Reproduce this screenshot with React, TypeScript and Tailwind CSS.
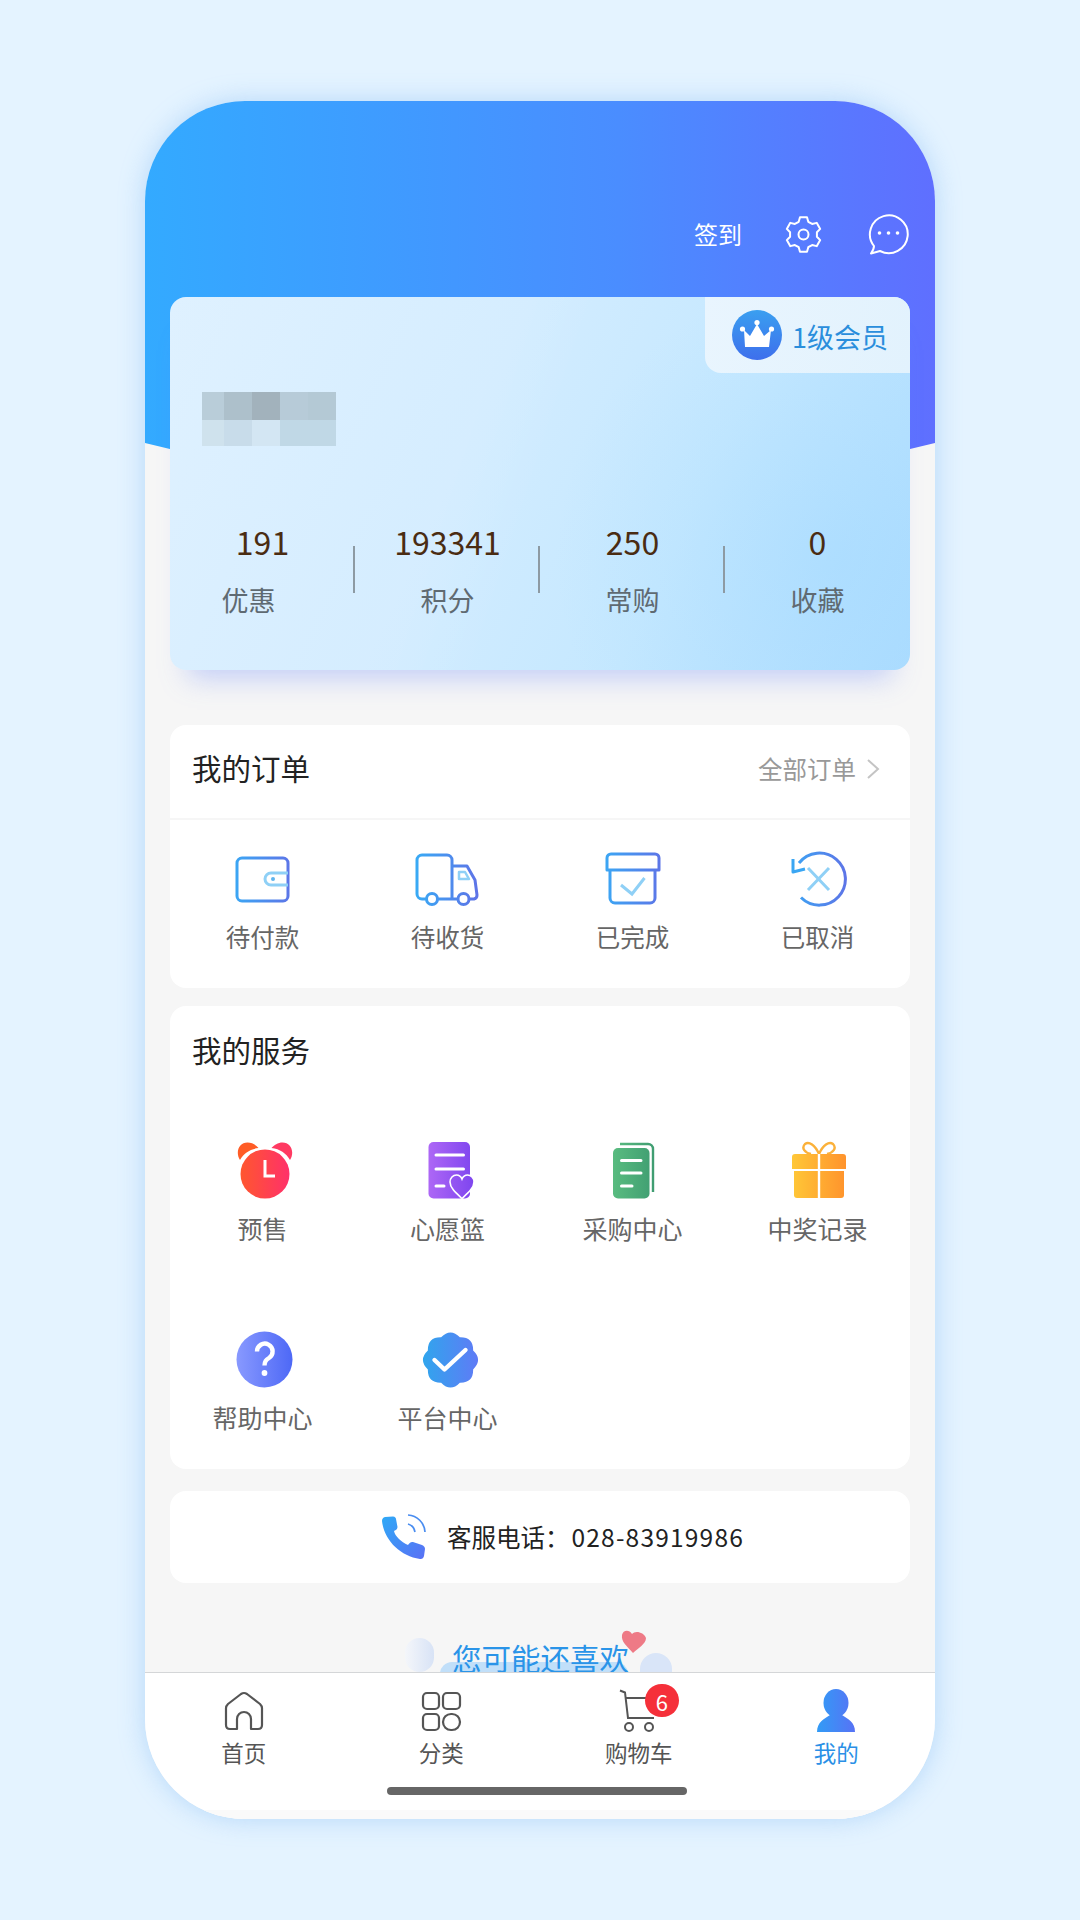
const FONT = "font-['Noto_Sans_CJK_SC','Noto_Sans',sans-serif]";

const stats = [
  { value: '191', label: '优惠', shift: 'pr-[28px]' },
  { value: '193341', label: '积分', shift: '' },
  { value: '250', label: '常购', shift: '' },
  { value: '0', label: '收藏', shift: '' },
];

const blurTop = ['bg-[#b9cdd9]', 'bg-[#adc0cb]', 'bg-[#a2b2bc]', 'bg-[#b7cbd8]', 'bg-[#b4c9d5]'];
const blurBottom = ['bg-[#cfe2ed]', 'bg-[#c8dcea]', 'bg-[#d3e6f3]', 'bg-[#c0d8e6]', 'bg-[#c0d8e6]'];
const blurWidths = ['w-[22px]', 'w-[28px]', 'w-[28px]', 'w-[28px]', 'w-[28px]'];

// 6 tooth gear outline
function gearPath() {
  const pts: string[] = [];
  for (let i = 0; i < 6; i++) {
    const a = (i * Math.PI) / 3 - Math.PI / 2;
    const p = (r: number, d: number) =>
      `${(18.5 + r * Math.cos(a + d)).toFixed(2)} ${(18.5 + r * Math.sin(a + d)).toFixed(2)}`;
    pts.push(p(13.6, -0.36), p(17.6, -0.2), p(17.6, 0.2), p(13.6, 0.36));
  }
  return 'M' + pts.join(' L') + ' Z';
}

// scalloped badge
function scallopPath(cx: number, cy: number) {
  let d = '';
  for (let i = 0; i < 8; i++) {
    const a0 = (i * Math.PI) / 4 - Math.PI / 2 - Math.PI / 8;
    const a1 = a0 + Math.PI / 4;
    const am = (a0 + a1) / 2;
    const x0 = cx + 24.5 * Math.cos(a0);
    const y0 = cy + 24.5 * Math.sin(a0);
    const x1 = cx + 24.5 * Math.cos(a1);
    const y1 = cy + 24.5 * Math.sin(a1);
    const xm = cx + 32.5 * Math.cos(am);
    const ym = cy + 32.5 * Math.sin(am);
    d += `${i === 0 ? `M${x0.toFixed(2)} ${y0.toFixed(2)} ` : ''}Q${xm.toFixed(2)} ${ym.toFixed(2)} ${x1.toFixed(2)} ${y1.toFixed(2)} `;
  }
  return d + 'Z';
}

const Grad = ({ id, from, to, x2 = 66 }: { id: string; from: string; to: string; x2?: number }) => (
  <linearGradient id={id} gradientUnits="userSpaceOnUse" x1="0" y1="0" x2={x2} y2="0">
    <stop offset="0" stopColor={from} />
    <stop offset="1" stopColor={to} />
  </linearGradient>
);

const WalletIcon = () => (
  <svg width="66" height="56" viewBox="0 0 66 56" fill="none">
    <defs><Grad id="o1" from="#38abf5" to="#6070e6" /></defs>
    <rect x="7" y="7" width="51" height="43" rx="5" stroke="url(#o1)" strokeWidth="3" />
    <path d="M58 22 H41 a6 6 0 0 0 0 12 H58" stroke="#8fd0f6" strokeWidth="3" />
    <circle cx="43" cy="28" r="2" fill="#5fb4ee" />
  </svg>
);

const TruckIcon = () => (
  <svg width="66" height="56" viewBox="0 0 66 56" fill="none">
    <defs><Grad id="o2" from="#38abf5" to="#6070e6" /></defs>
    <g stroke="url(#o2)" strokeWidth="3" strokeLinejoin="round">
      <path d="M11.5 48 H7 a5 5 0 0 1 -5 -5 V9 a5 5 0 0 1 5 -5 H32 a5 5 0 0 1 5 5 V48" />
      <path d="M37 15 H52 L60 29 L62 44 a4 4 0 0 1 -3 4 H54" />
      <path d="M22.5 48 H43" />
      <circle cx="17" cy="48" r="5.5" />
      <circle cx="48.5" cy="48" r="5.5" />
    </g>
    <path d="M44 21 H50 L54 28 H44 Z" stroke="#8fd0f6" strokeWidth="2.5" strokeLinejoin="round" />
  </svg>
);

const BoxIcon = () => (
  <svg width="66" height="56" viewBox="0 0 66 56" fill="none">
    <defs><Grad id="o3" from="#38abf5" to="#6070e6" /></defs>
    <g stroke="url(#o3)" strokeWidth="3" strokeLinejoin="round">
      <path d="M7 19 V7 a4 4 0 0 1 4 -4 H55 a4 4 0 0 1 4 4 V19 Z" />
      <path d="M10 19 V47 a5 5 0 0 0 5 5 H50 a5 5 0 0 0 5 -5 V19" />
    </g>
    <path d="M21 34 L32 43 L44.5 27" stroke="#8fd0f6" strokeWidth="3" />
  </svg>
);

const CancelIcon = () => (
  <svg width="66" height="56" viewBox="0 0 66 56" fill="none">
    <defs><Grad id="o4" from="#38abf5" to="#6070e6" /></defs>
    <path d="M16 46.5 A26 26 0 1 0 14 12" stroke="url(#o4)" strokeWidth="3" />
    <path d="M8 8 L8 21 L20 18" stroke="#3aa6f3" strokeWidth="3" strokeLinejoin="round" />
    <path d="M23 17 L44 39 M44 17 L23 39" stroke="#8fd0f6" strokeWidth="3" />
  </svg>
);

const AlarmIcon = () => (
  <svg width="60" height="60" viewBox="0 0 60 60" fill="none">
    <defs><Grad id="s1" from="#ff5c26" to="#ff2e6e" x2={60} /></defs>
    <circle cx="32" cy="33" r="24.5" fill="url(#s1)" />
    <path d="M7 19 C2 11 6 1.5 14.5 1.5 C19 1.5 23 4 25.5 7 C17 8 11 12 7 19Z" fill="#ff5c26" />
    <path d="M57 19 C62 11 58 1.5 49.5 1.5 C45 1.5 41 4 38.5 7 C47 8 53 12 57 19Z" fill="#ff3a62" />
    <path d="M32 19 V35 H42" stroke="#fff" strokeWidth="3" />
  </svg>
);

const WishIcon = () => (
  <svg width="60" height="60" viewBox="0 0 60 60" fill="none">
    <defs><Grad id="s2" from="#b86ff7" to="#7a42ee" x2={60} /></defs>
    <rect x="10.5" y="1" width="41.5" height="56.5" rx="5" fill="url(#s2)" />
    <path d="M18 14 H45.5 M18 28 H45.5 M18 45 H26" stroke="#fff" strokeWidth="3" strokeLinecap="round" />
    <path
      d="M44 57.5 C38 52 32 47 32 41 C32 37 35 34 38.5 34 C41 34 43 35.5 44 38 C45 35.5 47 34 49.5 34 C53 34 56 37 56 41 C56 47 50 52 44 57.5Z"
      fill="url(#s2)"
      stroke="#fff"
      strokeWidth="1.6"
    />
  </svg>
);

const DocsIcon = () => (
  <svg width="60" height="60" viewBox="0 0 60 60" fill="none">
    <defs><Grad id="s3" from="#5fc383" to="#3d9a70" x2={55} /></defs>
    <path d="M17 3 H45 a5 5 0 0 1 5 5 V51" stroke="url(#s3)" strokeWidth="2.4" />
    <rect x="10" y="7" width="36.5" height="50.5" rx="5" fill="url(#s3)" />
    <path d="M18.5 19.5 H38 M18.5 32 H38 M18.5 45 H29" stroke="#fff" strokeWidth="3" strokeLinecap="round" />
  </svg>
);

const GiftIcon = () => (
  <svg width="60" height="60" viewBox="0 0 60 60" fill="none">
    <defs><Grad id="s4" from="#ffcb38" to="#ff912c" x2={60} /></defs>
    <path d="M31 13 C27 4 21 0 17 3 C13 7 17 12 23 13 M31 13 C35 4 41 0 45 3 C49 7 45 12 39 13" stroke="#fbb13a" strokeWidth="2.4" />
    <path d="M4 16 a3 3 0 0 1 3 -3 H55 a3 3 0 0 1 3 3 V28 H4 Z" fill="url(#s4)" />
    <path d="M6 30 H56 V54 a3 3 0 0 1 -3 3 H9 a3 3 0 0 1 -3 -3 Z" fill="url(#s4)" />
    <path d="M31 13 V57" stroke="#fff" strokeWidth="2.4" />
  </svg>
);

const HelpIcon = () => (
  <svg width="60" height="60" viewBox="0 0 60 60" fill="none">
    <defs><Grad id="s5" from="#8c9cff" to="#4d68f6" x2={60} /></defs>
    <circle cx="31.5" cy="29.5" r="28" fill="url(#s5)" />
    <path d="M24 21.5 a7.8 7.8 0 1 1 12 6.5 c-3 2 -4.5 3.2 -4.5 7.5" stroke="#fff" strokeWidth="4.4" />
    <circle cx="31.5" cy="43" r="2.9" fill="#fff" />
  </svg>
);

const VerifiedIcon = () => (
  <svg width="60" height="60" viewBox="0 0 60 60" fill="none">
    <defs><Grad id="s6" from="#2ca9ec" to="#5f7bf6" x2={60} /></defs>
    <path d={scallopPath(32.5, 30)} fill="url(#s6)" />
    <path d="M16.5 30 L26.5 39.5 L47.5 20" stroke="#fff" strokeWidth="4.4" strokeLinecap="round" strokeLinejoin="round" />
  </svg>
);

const orders = [
  { label: '待付款', icon: <WalletIcon /> },
  { label: '待收货', icon: <TruckIcon /> },
  { label: '已完成', icon: <BoxIcon /> },
  { label: '已取消', icon: <CancelIcon /> },
];

const services = [
  { label: '预售', icon: <AlarmIcon /> },
  { label: '心愿篮', icon: <WishIcon /> },
  { label: '采购中心', icon: <DocsIcon /> },
  { label: '中奖记录', icon: <GiftIcon /> },
  { label: '帮助中心', icon: <HelpIcon /> },
  { label: '平台中心', icon: <VerifiedIcon /> },
];

const TabBar = () => (
  <div className="relative z-10 shrink-0 bg-white border-t border-[#d4d6d8]">
    <div className="grid grid-cols-4 pt-[16px]">
      <div className="flex flex-col items-center">
        <svg width="44" height="44" viewBox="0 0 44 44" fill="none" stroke="#555" strokeWidth="2.2">
          <path d="M15 40 H8 Q4 40 4 36 V19 Q4 17 6 15 L19 5 Q22 3 25 5 L38 15 Q40 17 40 19 V36 Q40 40 36 40 H29 V30 a7 7 0 0 0 -14 0 Z" strokeLinejoin="round" />
        </svg>
        <span className="mt-[4px] text-[22.5px] leading-[30px] text-[#555]">首页</span>
      </div>
      <div className="flex flex-col items-center">
        <svg width="44" height="44" viewBox="0 0 44 44" fill="none" stroke="#555" strokeWidth="2.2">
          <rect x="4" y="4" width="16" height="16" rx="4" />
          <rect x="24" y="4" width="17" height="16" rx="4" />
          <rect x="4" y="25" width="16" height="16" rx="4" />
          <rect x="24" y="25" width="17" height="16" rx="8" />
        </svg>
        <span className="mt-[4px] text-[22.5px] leading-[30px] text-[#555]">分类</span>
      </div>
      <div className="flex flex-col items-center">
        <div className="relative h-[44px] w-[44px]">
          <svg width="44" height="44" viewBox="0 0 44 44" fill="none" stroke="#555" strokeWidth="2">
            <path d="M3 1.5 L8 3.5 L11 29 H37" />
            <path d="M9 9 H38" />
            <circle cx="12" cy="38" r="4" />
            <circle cx="32" cy="38" r="4" />
          </svg>
          <span className="absolute left-[28px] top-[-5px] flex h-[33px] w-[34px] items-center justify-center rounded-full bg-[#f5303a] text-[22px] leading-none text-white">
            6
          </span>
        </div>
        <span className="mt-[4px] text-[22.5px] leading-[30px] text-[#555]">购物车</span>
      </div>
      <div className="flex flex-col items-center">
        <svg width="44" height="44" viewBox="0 0 44 44" fill="none">
          <defs><Grad id="t1" from="#2f9ff6" to="#5a6ff5" x2={44} /></defs>
          <ellipse cx="22" cy="14" rx="12.5" ry="14" fill="url(#t1)" />
          <path d="M3 43 C3 33 10 30 16 26 H28 C34 30 41 33 41 43 Z" fill="url(#t1)" />
        </svg>
        <span className="mt-[4px] text-[22.5px] leading-[30px] text-[#2a90e6]">我的</span>
      </div>
    </div>
    <div className="ml-[242px] mt-[20px] h-[8px] w-[300px] rounded-full bg-[#666]" />
    <div className="mt-[15px] h-[9px] bg-[#fafafa]" />
  </div>
);

const App = () => {
  return (
    <div className={`${FONT} h-[1920px] w-[1080px] overflow-hidden bg-[#e4f3ff] pt-[101px]`}>
      <div className="mx-auto flex h-[1718px] w-[790px] flex-col overflow-hidden rounded-[100px] bg-[#f6f6f6] shadow-[0_0_26px_rgba(110,175,240,0.4)]">
        {/* Header gradient runs behind the member card */}
        <div className="h-[437px] shrink-0 bg-[linear-gradient(90deg,#33aaff_0%,#4a8dff_60%,#5f6fff_100%)] [clip-path:polygon(0_0,100%_0,100%_342px,50%_437px,0_342px)]">
          <div className="flex items-center justify-end pr-[24px] pt-[111px] text-white">
            <span className="text-[24px] leading-[44px]">签到</span>
            <svg className="ml-[43px]" width="37" height="37" viewBox="0 0 37 37" fill="none" stroke="#fff" strokeWidth="2" strokeLinejoin="round">
              <path d={gearPath()} />
              <circle cx="18.5" cy="18.5" r="5" />
            </svg>
            <svg className="ml-[45px]" width="44" height="44" viewBox="0 0 44 44" fill="none">
              <path d="M13 39 L4 41.5 C6 38.5 7 36 7 34 A18.9 18.9 0 1 1 13 39 Z" stroke="#fff" strokeWidth="2" strokeLinejoin="round" />
              <circle cx="12.5" cy="21" r="1.8" fill="#fff" />
              <circle cx="21.5" cy="21" r="1.8" fill="#fff" />
              <circle cx="30.5" cy="21" r="1.8" fill="#fff" />
            </svg>
          </div>
        </div>

        <div className="relative -mt-[241px] flex-1 overflow-hidden px-[25px]">
          {/* Member card */}
          <div className="relative mb-[55px] h-[373px] rounded-[16px] bg-[linear-gradient(108deg,rgba(255,255,255,0.08)_0%,rgba(255,255,255,0.08)_40%,rgba(255,255,255,0)_50%),radial-gradient(circle_280px_at_90%_70%,rgba(150,212,255,0.3),rgba(150,212,255,0)_100%),linear-gradient(115deg,#dcf0ff_0%,#d2ecff_40%,#c5e8ff_68%,#aeddff_100%)] shadow-[0_26px_26px_-18px_rgba(110,140,250,0.38)]">
            <div className="absolute right-0 top-0 flex h-[76px] w-[205px] items-center rounded-bl-[16px] rounded-tr-[16px] bg-[linear-gradient(100deg,#e9f5fe,#e2f2fd)] pl-[27px]">
              <svg width="50" height="50" viewBox="0 0 50 50" fill="none">
                <defs>
                  <linearGradient id="c1" x1="0" y1="0" x2="0" y2="1">
                    <stop offset="0" stopColor="#3a9ff0" />
                    <stop offset="1" stopColor="#3e6fec" />
                  </linearGradient>
                </defs>
                <circle cx="25" cy="25" r="25" fill="url(#c1)" />
                <path d="M12 20 L18 26 L25 14 L32 26 L39 20 L37 37 H13 Z" fill="#fff" />
                <circle cx="10.5" cy="19" r="2.6" fill="#fff" />
                <circle cx="25" cy="12.5" r="2.6" fill="#fff" />
                <circle cx="39.5" cy="19" r="2.6" fill="#fff" />
              </svg>
              <span className="ml-[10px] mt-[2px] whitespace-nowrap text-[27px] leading-none text-[#2a8edc]">1级会员</span>
            </div>

            <div className="flex flex-col pl-[32px] pt-[95px]">
              <div className="flex">
                {blurTop.map((c, i) => (
                  <div key={i} className={`h-[28px] ${blurWidths[i]} ${c}`} />
                ))}
              </div>
              <div className="flex">
                {blurBottom.map((c, i) => (
                  <div key={i} className={`h-[26px] ${blurWidths[i]} ${c}`} />
                ))}
              </div>
            </div>

            <div className="mt-[73px] grid grid-cols-4">
              {stats.map((s, i) => (
                <div key={s.label} className="relative flex flex-col items-center">
                  <span className="text-[32px] leading-[44px] text-[#4a2c12]">{s.value}</span>
                  <span className={`mt-[17px] text-[27px] leading-[40px] text-[#5f6a72] ${s.shift}`}>{s.label}</span>
                  {i < 3 && <div className="absolute right-0 top-[27px] h-[47px] w-[2px] bg-[#8d9aa3]" />}
                </div>
              ))}
            </div>
          </div>

          {/* Orders */}
          <div className="h-[263px] rounded-[16px] bg-white">
            <div className="flex h-[95px] items-center justify-between border-b-2 border-[#f6f6f6] pb-[6px] pl-[22px] pr-[30px]">
              <span className="-mt-[4px] text-[29.5px] leading-[40px] text-[#222]">我的订单</span>
              <div className="flex items-center gap-[10px]">
                <span className="text-[24.5px] leading-[34px] text-[#999]">全部订单</span>
                <svg width="14" height="20" viewBox="0 0 14 20" fill="none" stroke="#c4c4c4" strokeWidth="2">
                  <path d="M2 1 L12 10 L2 19" />
                </svg>
              </div>
            </div>
            <div className="grid grid-cols-4 pt-[31px]">
              {orders.map(o => (
                <div key={o.label} className="flex flex-col items-center">
                  {o.icon}
                  <span className="mt-[13px] text-[24.5px] leading-[34px] text-[#666]">{o.label}</span>
                </div>
              ))}
            </div>
          </div>

          {/* Services */}
          <div className="mt-[18px] h-[463px] rounded-[16px] bg-white pt-[23px]">
            <div className="pl-[22px] text-[29.5px] leading-[40px] text-[#222]">我的服务</div>
            <div className="mt-[72px] grid grid-cols-4 gap-y-[85px]">
              {services.map(s => (
                <div key={s.label} className="flex flex-col items-center">
                  {s.icon}
                  <span className="mt-[10px] text-[25px] leading-[34px] text-[#666]">{s.label}</span>
                </div>
              ))}
            </div>
          </div>

          {/* Hotline */}
          <div className="mt-[22px] flex h-[92px] items-center rounded-[16px] bg-white pl-[212px]">
            <svg width="46" height="46" viewBox="0 0 46 46" fill="none">
              <defs>
                <linearGradient id="p1" x1="0" y1="0" x2="1" y2="1">
                  <stop offset="0" stopColor="#2fa9f6" />
                  <stop offset="1" stopColor="#5a70f5" />
                </linearGradient>
              </defs>
              <path
                d="M3 3 L11 2.5 C13 2.5 14 4 14 5 L15.5 13 C15.5 15 14 16 12 17 C13 22 19 28 26 31 C27 29 29 27.5 31 28 L40 31 C42 32 43 33 43 35 L42 42 C41.5 44 40 45.5 38 45 C18 42 2 26 0 7 C0 5 1 3.5 3 3Z"
                fill="url(#p1)"
              />
              <path d="M26 10 a10 10 0 0 1 7 8 M26 1 a18 18 0 0 1 17 17" stroke="#4a8df0" strokeWidth="1.7" />
            </svg>
            <span className="ml-[19px] whitespace-nowrap text-[24.5px] leading-[34px] text-[#222]">
              客服电话：<span className="ml-[2px] tracking-[1.2px]">028-83919986</span>
            </span>
          </div>

          {/* Recommend heading, cut off by the tab bar */}
          <div className="relative h-[89px]">
            <div className="absolute left-[270px] top-[79px] h-[30px] w-[188px] rounded-[12px] bg-[#c1dff9]" />
            <div className="absolute left-[235px] top-[55px] h-[34px] w-[29px] rounded-full bg-[linear-gradient(90deg,#f4f6fa,#d8e3f6)]" />
            <div className="absolute left-[470px] top-[70px] h-[34px] w-[32px] rounded-full bg-[#d9e5f8]" />
            <span className="absolute left-[282px] top-[54px] whitespace-nowrap text-[29.5px] leading-[40px] text-[#2a94e8]">您可能还喜欢</span>
            <svg className="absolute left-[451px] top-[46px]" width="26" height="24" viewBox="0 0 26 24">
              <path d="M12 24 C6 17 0 13 1 6 C2 1 8 0 11 5 C14 1 23 3 25 9 C25 15 17 19 12 24Z" fill="#ee7a86" />
            </svg>
          </div>
        </div>

        <TabBar />
      </div>
    </div>
  );
};

export default App;
